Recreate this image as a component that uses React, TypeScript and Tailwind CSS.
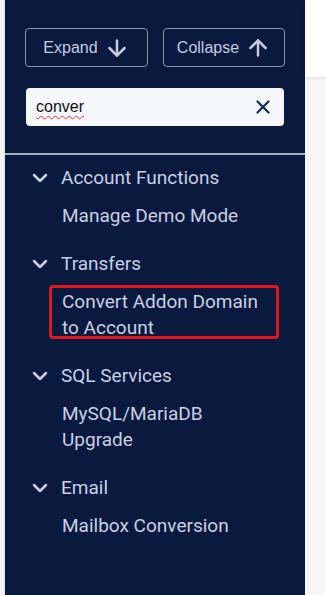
import React from 'react';
import { ChevronDown, ArrowDown, ArrowUp, X } from 'lucide-react';

const GROUPS = [
  { title: 'Account Functions', items: ['Manage Demo Mode'] },
  { title: 'Transfers', items: ['Convert Addon Domain to Account'], marked: true },
  { title: 'SQL Services', items: ['MySQL/MariaDB Upgrade'] },
  { title: 'Email', items: ['Mailbox Conversion'] },
];

const App: React.FC = () => {
  return (
    <div className="flex h-[595px] w-[326px] overflow-hidden bg-[#f7f7f7]">
      <div className="w-[5px] shrink-0 border-r border-[#e4e4e4] bg-[#f4f4f4]" />

      <aside className="flex w-[300px] shrink-0 flex-col bg-[#0a1a3e]">
        <div className="flex gap-[15px] px-5 pt-[28px]">
          <button className="flex h-[39px] w-[123px] items-center justify-center gap-[6px] rounded border border-[#8b95ab] font-['Liberation_Sans',sans-serif] text-[16px] text-[#c4cce0]">
            Expand
            <ArrowDown className="h-[26px] w-[26px]" strokeWidth={2.3} />
          </button>
          <button className="flex h-[39px] w-[122px] items-center justify-center gap-[6px] rounded border border-[#8b95ab] font-['Liberation_Sans',sans-serif] text-[16px] text-[#c4cce0]">
            Collapse
            <ArrowUp className="h-[26px] w-[26px]" strokeWidth={2.3} />
          </button>
        </div>

        <div className="mx-[21px] mt-[21px] flex h-[38px] items-center rounded bg-[#f5f7fa] pl-[10px] pr-[10px]">
          <span className="flex-1 font-['Liberation_Sans',sans-serif] text-[16px] text-[#111] underline decoration-[#e03030] decoration-wavy decoration-1 underline-offset-[3px]">
            conver
          </span>
          <X className="h-[22px] w-[22px] text-[#1b2b5c]" strokeWidth={2.5} />
        </div>

        <div className="mt-[27px] h-[2px] bg-[#a3acbf]" />

        <nav className="flex flex-col pt-[10px] font-['Roboto',sans-serif] text-[19px] leading-[26px] text-[#c8d0e2]">
          {GROUPS.map((g) => (
            <div key={g.title} className="mb-[22px]">
              <div className="flex items-center">
                <ChevronDown className="ml-[23px] h-[24px] w-[24px] text-[#c8d0e2]" strokeWidth={2.5} />
                <span className="ml-[9px]">{g.title}</span>
              </div>
              <div className="relative mt-[12px] pl-[57px]">
                {g.items.map((it) => (
                  <div key={it} className="w-[205px]">
                    {it}
                  </div>
                ))}
                {g.marked && (
                  <div className="absolute left-[44px] top-[-4px] h-[54px] w-[230px] rounded-sm border-[3px] border-[#e8141c]" />
                )}
              </div>
            </div>
          ))}
        </nav>
      </aside>

      <div className="flex flex-1 flex-col">
        <div className="h-[77px] bg-white shadow-[0_1px_3px_rgba(0,0,0,0.12)]" />
      </div>
    </div>
  );
};

export default App;
